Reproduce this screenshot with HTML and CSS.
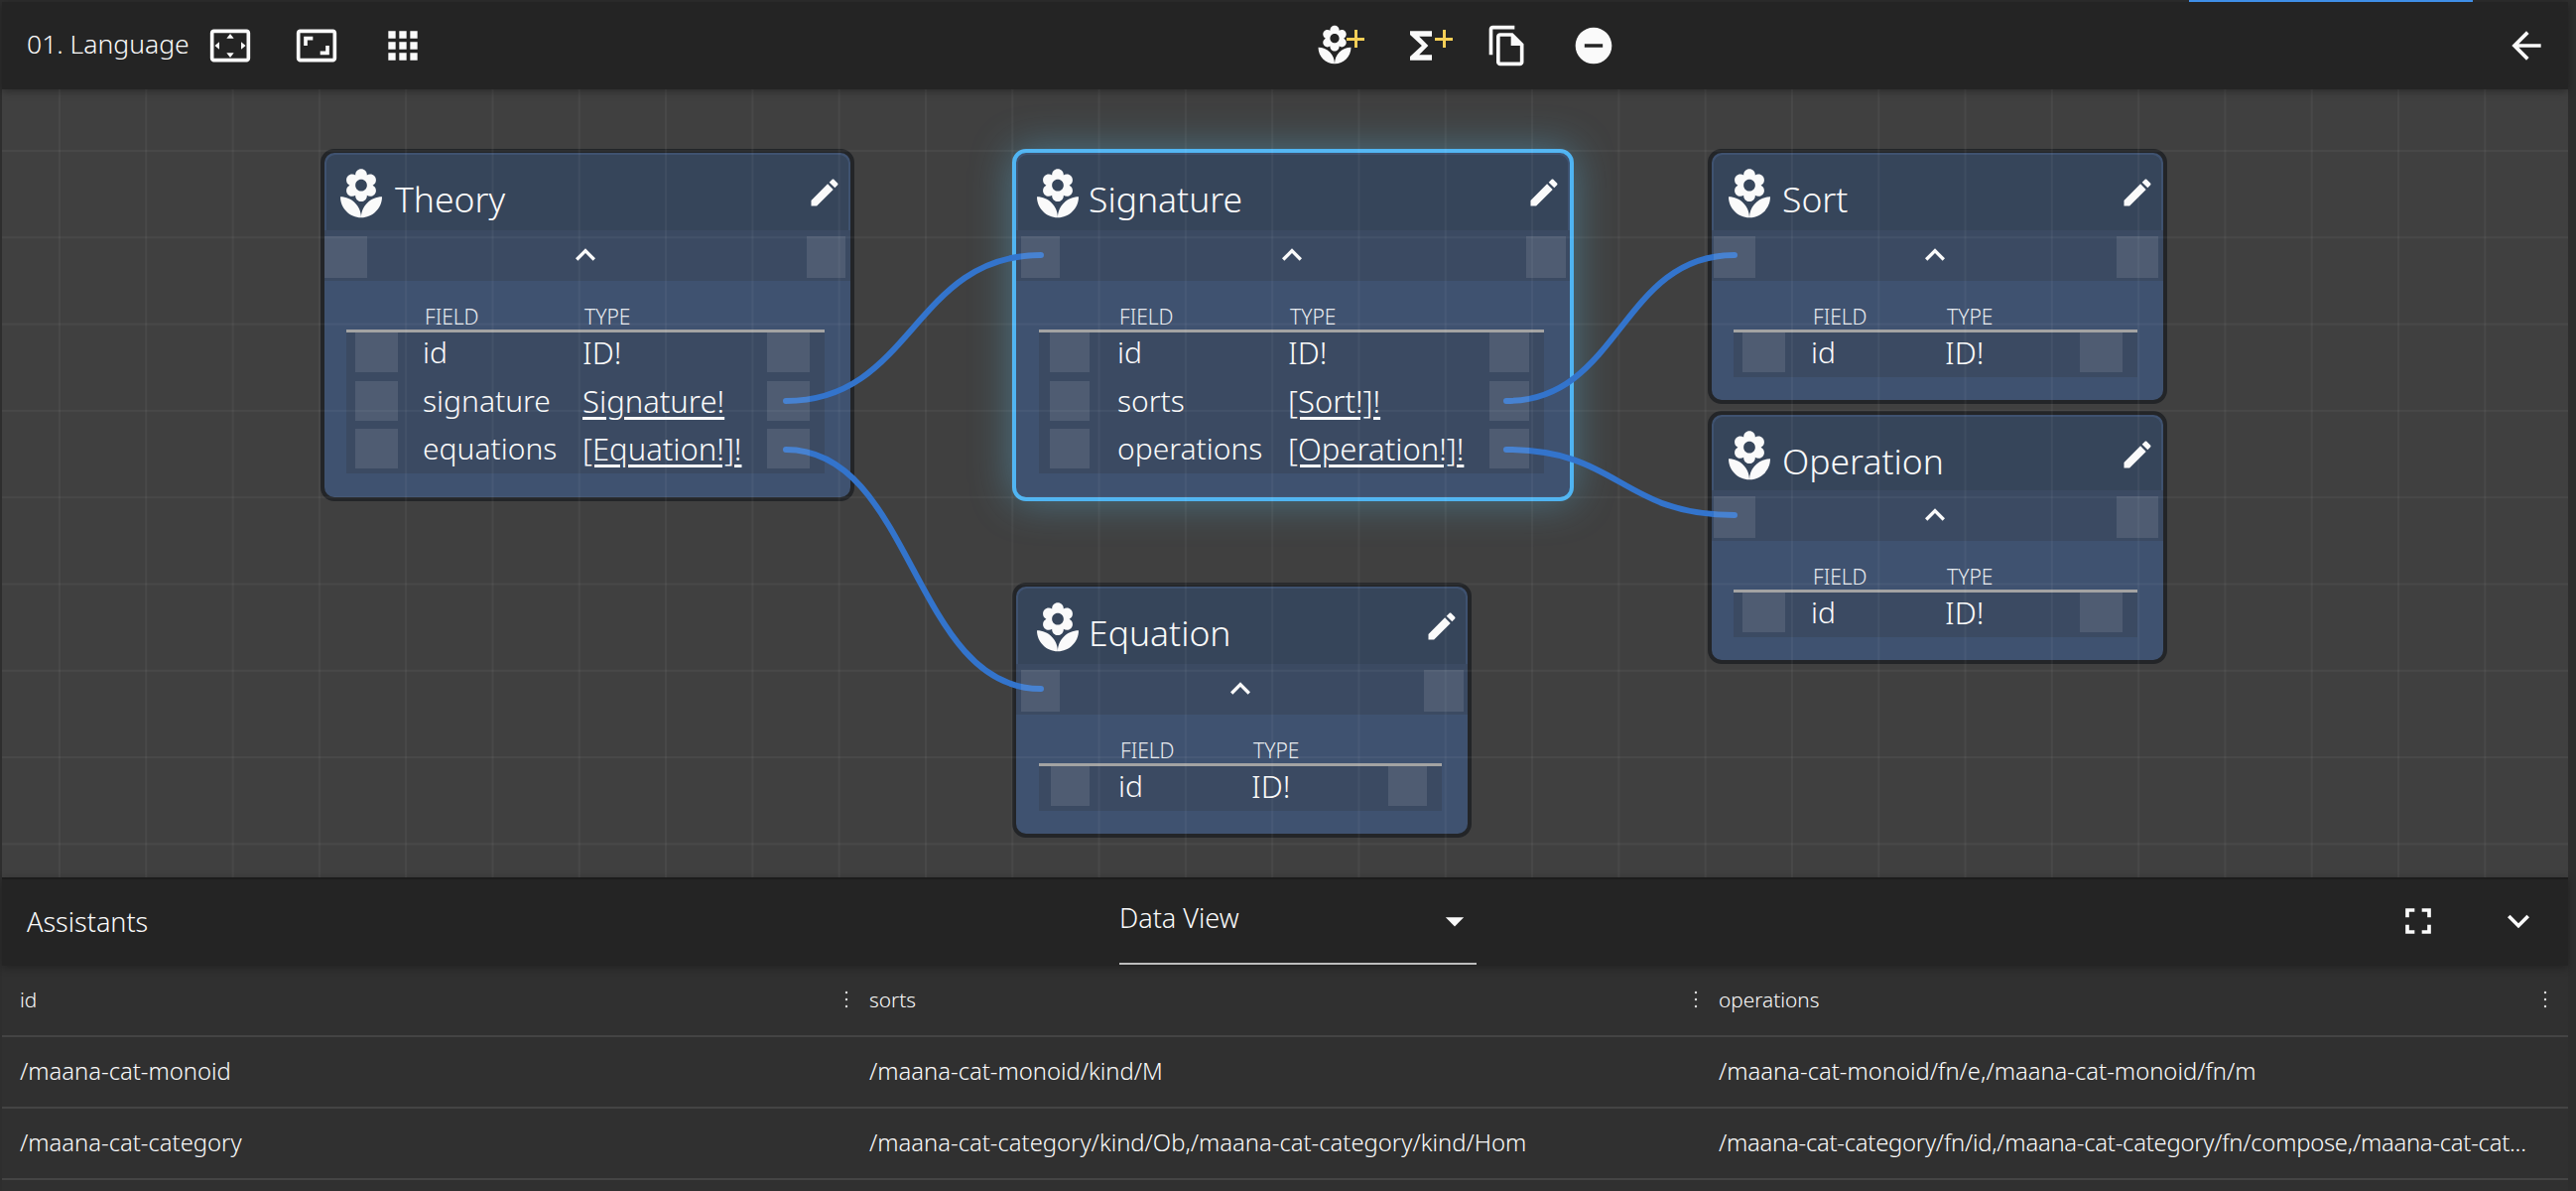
FILE: index.html
```html
<!DOCTYPE html>
<html lang="en">
<head>
  <meta charset="UTF-8">
  <meta name="viewport" content="width=device-width, initial-scale=1.0">
  <title>01. Language</title>
  <link rel="stylesheet" href="styles.css">
</head>
<body>
  <svg class="defs" width="0" height="0">
    <symbol id="i-flower" viewBox="0 0 24 24"><path d="M12 22c4.97 0 9-4.03 9-9-4.97 0-9 4.03-9 9zM5.6 10.25c0 1.38 1.12 2.5 2.5 2.5.53 0 1.01-.16 1.42-.44l-.02.19c0 1.38 1.12 2.5 2.5 2.5s2.5-1.12 2.5-2.5l-.02-.19c.4.28.89.44 1.42.44 1.38 0 2.5-1.12 2.5-2.5 0-1-.59-1.85-1.43-2.25.84-.4 1.43-1.25 1.43-2.25 0-1.38-1.12-2.5-2.5-2.5-.53 0-1.01.16-1.42.44l.02-.19C14.5 2.12 13.38 1 12 1S9.5 2.12 9.5 3.5l.02.19c-.4-.28-.89-.44-1.42-.44-1.38 0-2.5 1.12-2.5 2.5 0 1 .59 1.85 1.43 2.25-.84.4-1.43 1.25-1.43 2.25zM12 5.5c1.38 0 2.5 1.12 2.5 2.5s-1.12 2.5-2.5 2.5S9.5 9.38 9.5 8s1.12-2.5 2.5-2.5zM3 13c0 4.97 4.03 9 9 9 0-4.97-4.03-9-9-9z"/></symbol>
    <symbol id="i-edit" viewBox="0 0 24 24"><path d="M3 17.25V21h3.75L17.81 9.94l-3.75-3.75L3 17.25zM20.71 7.04c.39-.39.39-1.02 0-1.41l-2.34-2.34c-.39-.39-1.02-.39-1.41 0l-1.83 1.83 3.75 3.75 1.83-1.83z"/></symbol>
    <symbol id="i-less" viewBox="0 0 24 24"><path d="M12 8l-6 6 1.41 1.41L12 10.83l4.59 4.58L18 14z"/></symbol>
    <symbol id="i-more" viewBox="0 0 24 24"><path d="M16.59 8.59L12 13.17 7.41 8.59 6 10l6 6 6-6z"/></symbol>
    <symbol id="i-overscan" viewBox="0 0 24 24"><path d="M12.01 5.5L10 8h4l-1.99-2.5zM18 10v4l2.5-1.99L18 10zM6 10l-2.5 2.01L6 14v-4zm8 6h-4l2.01 2.5L14 16zm7-13H3c-1.1 0-2 .9-2 2v14c0 1.1.9 2 2 2h18c1.1 0 2-.9 2-2V5c0-1.1-.9-2-2-2zm0 16.01H3V4.99h18v14.02z"/></symbol>
    <symbol id="i-aspect" viewBox="0 0 24 24"><path d="M19 12h-2v3h-3v2h5v-5zM7 9h3V7H5v5h2V9zm14-6H3c-1.1 0-2 .9-2 2v14c0 1.1.9 2 2 2h18c1.1 0 2-.9 2-2V5c0-1.1-.9-2-2-2zm0 16.01H3V4.99h18v14.02z"/></symbol>
    <symbol id="i-apps" viewBox="0 0 24 24"><path d="M4 8h4V4H4v4zm6 12h4v-4h-4v4zm-6 0h4v-4H4v4zm0-6h4v-4H4v4zm6 0h4v-4h-4v4zm6-10v4h4V4h-4zm-6 4h4V4h-4v4zm6 6h4v-4h-4v4zm0 6h4v-4h-4v4z"/></symbol>
    <symbol id="i-sigma" viewBox="0 0 24 24"><path d="M18 4H6v2l6.5 6L6 18v2h12v-3h-7l5-5-5-5h7z"/></symbol>
    <symbol id="i-copy" viewBox="0 0 24 24"><path d="M16 1H4c-1.1 0-2 .9-2 2v14h2V3h12V1zm-1 4H8c-1.1 0-1.99.9-1.99 2L6 21c0 1.1.89 2 1.99 2H19c1.1 0 2-.9 2-2V11l-6-6zM8 21V7h6v5h5v9H8z"/></symbol>
    <symbol id="i-minus" viewBox="0 0 24 24"><path d="M12 2C6.48 2 2 6.48 2 12s4.48 10 10 10 10-4.48 10-10S17.52 2 12 2zm5 11H7v-2h10v2z"/></symbol>
    <symbol id="i-back" viewBox="0 0 24 24"><path d="M20 11H7.83l5.59-5.59L12 4l-8 8 8 8 1.41-1.41L7.83 13H20v-2z"/></symbol>
    <symbol id="i-full" viewBox="0 0 24 24"><path d="M7 14H5v5h5v-2H7v-3zm-2-4h2V7h3V5H5v5zm12 7h-3v2h5v-5h-2v3zM14 5v2h3v3h2V5h-5z"/></symbol>
    <symbol id="i-drop" viewBox="0 0 24 24"><path d="M7 10l5 5 5-5z"/></symbol>
    <symbol id="i-dots" viewBox="0 0 6 24"><circle cx="3" cy="5" r="1.2"/><circle cx="3" cy="12" r="1.2"/><circle cx="3" cy="19" r="1.2"/></symbol>
  </svg>

  <div class="progress"></div>
  <div class="app">
    <header class="toolbar">
      <span class="toolbar-title">01. Language</span>
      <div class="tools tools-left">
        <svg class="icon"><use href="#i-overscan"/></svg>
        <svg class="icon"><use href="#i-aspect"/></svg>
        <svg class="icon"><use href="#i-apps"/></svg>
      </div>
      <div class="tools tools-mid">
        <span class="plus-icon"><svg class="icon"><use href="#i-flower"/></svg><i class="plus"></i></span>
        <span class="plus-icon"><svg class="icon"><use href="#i-sigma"/></svg><i class="plus plus-sigma"></i></span>
        <svg class="icon"><use href="#i-copy"/></svg>
        <svg class="icon"><use href="#i-minus"/></svg>
      </div>
      <svg class="icon back"><use href="#i-back"/></svg>
    </header>

    <main class="canvas">
      <svg class="wires" width="2586" height="794">
        <path d="M790 314C918 314 918 167 1047 167"/>
        <path d="M790 363C918 363 918 604 1047 604"/>
        <path d="M1516 314C1631 314 1631 167 1746 167"/>
        <path d="M1516 363C1631 363 1631 429 1746 429"/>
      </svg>

      <section class="node node-theory">
        <div class="node-head">
          <svg class="node-flower"><use href="#i-flower"/></svg>
          <h2>Theory</h2>
          <svg class="node-edit"><use href="#i-edit"/></svg>
        </div>
        <div class="node-bar">
          <span class="handle"></span>
          <svg class="node-less"><use href="#i-less"/></svg>
          <span class="handle"></span>
        </div>
        <div class="fields">
          <div class="fields-head"><span>FIELD</span><span>TYPE</span></div>
          <div class="field-row"><span class="handle"></span><span class="name">id</span><span class="type">ID!</span><span class="handle"></span></div>
          <div class="field-row"><span class="handle"></span><span class="name">signature</span><span class="type"><a>Signature!</a></span><span class="handle"></span></div>
          <div class="field-row"><span class="handle"></span><span class="name">equations</span><span class="type"><a>[Equation!]!</a></span><span class="handle"></span></div>
        </div>
      </section>

      <section class="node node-signature">
        <div class="node-head">
          <svg class="node-flower"><use href="#i-flower"/></svg>
          <h2>Signature</h2>
          <svg class="node-edit"><use href="#i-edit"/></svg>
        </div>
        <div class="node-bar">
          <span class="handle"></span>
          <svg class="node-less"><use href="#i-less"/></svg>
          <span class="handle"></span>
        </div>
        <div class="fields">
          <div class="fields-head"><span>FIELD</span><span>TYPE</span></div>
          <div class="field-row"><span class="handle"></span><span class="name">id</span><span class="type">ID!</span><span class="handle"></span></div>
          <div class="field-row"><span class="handle"></span><span class="name">sorts</span><span class="type"><a>[Sort!]!</a></span><span class="handle"></span></div>
          <div class="field-row"><span class="handle"></span><span class="name">operations</span><span class="type"><a>[Operation!]!</a></span><span class="handle"></span></div>
        </div>
      </section>

      <section class="node node-sort">
        <div class="node-head">
          <svg class="node-flower"><use href="#i-flower"/></svg>
          <h2>Sort</h2>
          <svg class="node-edit"><use href="#i-edit"/></svg>
        </div>
        <div class="node-bar">
          <span class="handle"></span>
          <svg class="node-less"><use href="#i-less"/></svg>
          <span class="handle"></span>
        </div>
        <div class="fields">
          <div class="fields-head"><span>FIELD</span><span>TYPE</span></div>
          <div class="field-row"><span class="handle"></span><span class="name">id</span><span class="type">ID!</span><span class="handle"></span></div>
        </div>
      </section>

      <section class="node node-sort node-operation">
        <div class="node-head">
          <svg class="node-flower"><use href="#i-flower"/></svg>
          <h2>Operation</h2>
          <svg class="node-edit"><use href="#i-edit"/></svg>
        </div>
        <div class="node-bar">
          <span class="handle"></span>
          <svg class="node-less"><use href="#i-less"/></svg>
          <span class="handle"></span>
        </div>
        <div class="fields">
          <div class="fields-head"><span>FIELD</span><span>TYPE</span></div>
          <div class="field-row"><span class="handle"></span><span class="name">id</span><span class="type">ID!</span><span class="handle"></span></div>
        </div>
      </section>

      <section class="node node-equation">
        <div class="node-head">
          <svg class="node-flower"><use href="#i-flower"/></svg>
          <h2>Equation</h2>
          <svg class="node-edit"><use href="#i-edit"/></svg>
        </div>
        <div class="node-bar">
          <span class="handle"></span>
          <svg class="node-less"><use href="#i-less"/></svg>
          <span class="handle"></span>
        </div>
        <div class="fields">
          <div class="fields-head"><span>FIELD</span><span>TYPE</span></div>
          <div class="field-row"><span class="handle"></span><span class="name">id</span><span class="type">ID!</span><span class="handle"></span></div>
        </div>
      </section>
    </main>

    <div class="assist-bar">
      <span class="assist-title">Assistants</span>
      <div class="assist-select">
        <span>Data View</span>
        <svg class="icon"><use href="#i-drop"/></svg>
      </div>
      <svg class="icon assist-full"><use href="#i-full"/></svg>
      <svg class="icon assist-more"><use href="#i-more"/></svg>
    </div>

    <div class="data-table">
      <div class="data-row data-head">
        <div class="data-cell"><span>id</span><svg class="dots"><use href="#i-dots"/></svg></div>
        <div class="data-cell"><span>sorts</span><svg class="dots"><use href="#i-dots"/></svg></div>
        <div class="data-cell"><span>operations</span><svg class="dots"><use href="#i-dots"/></svg></div>
      </div>
      <div class="data-row">
        <div class="data-cell"><span>/maana-cat-monoid</span></div>
        <div class="data-cell"><span>/maana-cat-monoid/kind/M</span></div>
        <div class="data-cell"><span>/maana-cat-monoid/fn/e,/maana-cat-monoid/fn/m</span></div>
      </div>
      <div class="data-row">
        <div class="data-cell"><span>/maana-cat-category</span></div>
        <div class="data-cell"><span>/maana-cat-category/kind/Ob,/maana-cat-category/kind/Hom</span></div>
        <div class="data-cell data-cell-long"><span>/maana-cat-category/fn/id,/maana-cat-category/fn/compose,/maana-cat-cat...</span></div>
      </div>
    </div>
  </div>
</body>
</html>
```

FILE: styles.css
```css
*{
  box-sizing: border-box;
}
html, body{
  margin: 0;
  height: 100%;
}
body{
  background: #2e2e2e;
  color: #fafafa;
  font-family: "Noto Sans", "Open Sans", sans-serif;
  font-weight: 300;
  overflow: hidden;
  position: relative;
}
.defs{
  position: absolute;
}
svg{
  fill: currentColor;
  display: block;
  flex: none;
}
.icon{
  width: 44px;
  height: 44px;
}
.progress{
  position: absolute;
  top: 0;
  left: 2206px;
  width: 286px;
  height: 2px;
  background: #3f8fe8;
  z-index: 9;
}
.app{
  height: 1200px;
  margin: 0 8px 0 2px;
  padding-top: 2px;
  display: flex;
  flex-direction: column;
}

/* toolbar */
.toolbar{
  height: 88px;
  flex: none;
  background: #242424;
  display: flex;
  align-items: center;
  padding: 0 20px 0 25px;
  box-shadow: 0 2px 8px rgba(0, 0, 0, 0.35);
  position: relative;
  z-index: 5;
}
.toolbar-title{
  font-size: 26.5px;
  width: 183px;
  margin-top: -4px;
  white-space: nowrap;
}
.tools{
  display: flex;
  align-items: center;
  gap: 43px;
}
.tools-mid{
  margin-left: 895px;
}
.plus-icon{
  position: relative;
  display: block;
}
.plus{
  position: absolute;
  left: 34px;
  top: 6px;
  width: 18px;
  height: 18px;
  background:
    linear-gradient(#f6cf57, #f6cf57) center / 100% 3px no-repeat,
    linear-gradient(#f6cf57, #f6cf57) center / 3px 100% no-repeat;
}
.plus-sigma{
  left: 36px;
}
.back{
  margin-left: auto;
}

/* canvas */
.canvas{
  height: 794px;
  flex: none;
  position: relative;
  overflow: hidden;
  background: #404040;
}
.canvas::after{
  content: '';
  position: absolute;
  inset: 0;
  z-index: 1;
  background-image:
    linear-gradient(to right, rgba(255, 255, 255, 0.045) 2px, transparent 2px),
    linear-gradient(to bottom, rgba(255, 255, 255, 0.045) 2px, transparent 2px);
  background-size: 87.3px 87.3px;
  background-position: 57px 61px;
  pointer-events: none;
}
.wires{
  position: absolute;
  top: 0;
  left: 0;
  z-index: 2;
}
.wires path{
  fill: none;
  stroke: #3374cc;
  stroke-width: 6px;
  stroke-linecap: round;
}

/* nodes */
.node{
  position: absolute;
  border: 4px solid #232528;
  border-radius: 14px;
  background: #3f5270;
  padding-bottom: 23px;
  --head-h: 76px;
  --head-pad: 9px;
  --title-gap: 6px;
  --bar-left: 0px;
  --bar-right: 4px;
  --bar-lw: 43px;
  --bar-rw: 39px;
  --table-left: 22px;
  --table-right: 25px;
  --row-left: 9px;
  --row-right: 15px;
  --row-handle: 43px;
  --name-gap: 25px;
  --name-col: 187px;
}
.node-theory{
  left: 321px;
  top: 60px;
  width: 538px;
  padding-bottom: 24px;
  --table-right: 26px;
  --bar-right: 5px;
}
.node-signature{
  left: 1018px;
  top: 60px;
  width: 566px;
  padding-bottom: 24px;
  border-color: #4fb4f2;
  box-shadow: 0 0 42px rgba(96, 196, 240, 0.4);
  --head-pad: 14px;
  --title-gap: 3px;
  --bar-left: 5px;
  --bar-lw: 39px;
  --bar-rw: 40px;
  --table-left: 23px;
  --table-right: 26px;
  --row-left: 11px;
  --row-handle: 40px;
  --name-gap: 28px;
  --name-col: 201px;
}
.node-sort{
  left: 1719px;
  top: 60px;
  width: 463px;
  --head-pad: 10px;
  --title-gap: 5px;
  --bar-left: 2px;
  --bar-right: 5px;
  --bar-lw: 42px;
  --bar-rw: 42px;
  --table-left: 22px;
  --table-right: 26px;
  --row-handle: 43px;
  --name-gap: 26px;
  --name-col: 162px;
}
.node-operation{
  top: 324px;
  --head-h: 74px;
}
.node-equation{
  left: 1018px;
  top: 497px;
  width: 463px;
  --head-pad: 14px;
  --title-gap: 3px;
  --bar-left: 5px;
  --bar-lw: 39px;
  --bar-rw: 40px;
  --table-left: 23px;
  --table-right: 26px;
  --row-left: 12px;
  --row-handle: 39px;
  --name-gap: 29px;
  --name-col: 164px;
}
.node-head{
  height: var(--head-h);
  margin: 2px 2px 0;
  padding: 12px 6px 0 calc(var(--head-pad) - 2px);
  display: flex;
  align-items: flex-start;
  background: #36455a;
  border-radius: 9px 9px 0 0;
}
.node-head h2{
  margin: 9px 0 0 var(--title-gap);
  font-size: 35.5px;
  font-weight: 300;
  line-height: 46px;
}
.node-flower{
  width: 56px;
  height: 56px;
}
.node-edit{
  width: 36px;
  height: 36px;
  margin: 8px 0 0 auto;
}
.node-bar{
  height: 51px;
  padding: 6px var(--bar-right) 3px var(--bar-left);
  background: #3b4a62;
  display: flex;
  align-items: stretch;
  justify-content: space-between;
}
.node-bar .handle:first-child{
  width: var(--bar-lw);
}
.node-bar .handle:last-child{
  width: var(--bar-rw);
}
.node-less{
  width: 40px;
  height: 40px;
  margin: -1px 3px 0 0;
}
.handle{
  position: relative;
  z-index: 3;
  background: rgba(255, 255, 255, 0.1);
  display: block;
}
.fields{
  margin: 0 var(--table-right) 0 var(--table-left);
}
.fields-head{
  height: 52px;
  padding: 0 0 0 calc(var(--row-left) + var(--row-handle) + var(--name-gap) + 2px);
  border-bottom: 3px solid #a3a3a3;
  display: grid;
  grid-template-columns: calc(var(--name-col) - var(--name-gap) - 1px) 1fr;
  align-items: end;
  font-size: 21px;
  line-height: 26px;
  color: #e8ebef;
}
.field-row{
  background: #3b4a62;
  padding: 0 var(--row-right) 9.5px var(--row-left);
  display: grid;
  grid-template-columns: var(--row-handle) var(--name-col) 1fr var(--row-handle);
  height: 48.5px;
  font-size: 30px;
  line-height: 40px;
}
.field-row:last-child{
  height: 45px;
  padding-bottom: 6px;
}
.name{
  padding-left: var(--name-gap);
}
.type{
  font-size: 31px;
  margin-left: -1px;
}
.type a{
  text-decoration: underline;
  text-underline-offset: 4px;
}

/* assistants */
.assist-bar{
  height: 89px;
  flex: none;
  background: #242424;
  border-top: 2px solid #1c1c1c;
  display: flex;
  align-items: center;
  padding: 0 28px 3px 25px;
  box-shadow: 0 2px 8px rgba(0, 0, 0, 0.3);
  position: relative;
  z-index: 5;
}
.assist-title{
  width: 1101px;
  font-size: 27px;
}
.assist-select{
  width: 360px;
  height: 86px;
  align-self: flex-start;
  border-bottom: 2px solid #bdbdbd;
  display: flex;
  align-items: flex-start;
  justify-content: space-between;
  font-size: 27px;
  line-height: 77px;
}
.assist-select .icon{
  margin: 20px 0 0 0;
}
.assist-full{
  margin-left: auto;
}
.assist-more{
  margin-left: 57px;
}

/* data table */
.data-table{
  flex: 1;
  background: #303030;
  overflow: hidden;
}
.data-row{
  display: grid;
  grid-template-columns: repeat(3, 856px);
  height: 72px;
  border-bottom: 2px solid #444;
  font-size: 23.8px;
}
.data-head{
  height: 72px;
  font-size: 20.8px;
}
.data-cell{
  display: flex;
  align-items: center;
  justify-content: space-between;
  padding: 0 8px 3px 18px;
  min-width: 0;
}
.data-head .data-cell{
  padding-right: 2px;
}
.data-cell span{
  white-space: nowrap;
}
.data-cell-long{
  letter-spacing: -0.25px;
}
.dots{
  width: 6px;
  height: 24px;
  color: #ddd;
}
```
